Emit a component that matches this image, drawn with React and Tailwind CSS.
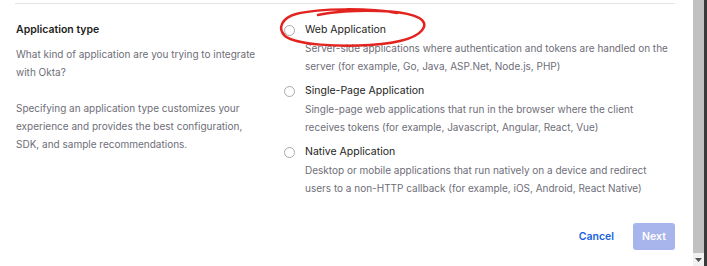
import React from "react";

const OPTIONS = [
  {
    label: "Web Application",
    desc: [
      "Server-side applications where authentication and tokens are handled on the",
      "server (for example, Go, Java, ASP.Net, Node.js, PHP)",
    ],
  },
  {
    label: "Single-Page Application",
    desc: [
      "Single-page web applications that run in the browser where the client",
      "receives tokens (for example, Javascript, Angular, React, Vue)",
    ],
  },
  {
    label: "Native Application",
    desc: [
      "Desktop or mobile applications that run natively on a device and redirect",
      "users to a non-HTTP callback (for example, iOS, Android, React Native)",
    ],
  },
];

function Radio() {
  return <span className="block w-[11px] h-[11px] rounded-full border border-[#a9a9b2] bg-white shrink-0" />;
}

export default function App() {
  return (
    <div className="w-[707px] h-[266px] bg-white flex overflow-hidden font-['Inter',sans-serif] text-[10px] leading-[18px] relative">
      <div className="w-[693px] pl-[15px] pr-[18px] pt-[3px]">
        <div className="border-t border-[#e3e3e6] pt-[17px] flex">
          <div className="w-[268px] pl-[1px]">
            <h3 className="font-semibold text-[10.5px] text-[#1d1d21]">Application type</h3>
            <p className="mt-[6px] text-[#6e6e78] whitespace-nowrap">
              What kind of application are you trying to integrate<br />with Okta?
            </p>
            <p className="mt-[18px] text-[#6e6e78] whitespace-nowrap">
              Specifying an application type customizes your<br />
              experience and provides the best configuration,<br />
              SDK, and sample recommendations.
            </p>
          </div>
          <div className="flex-1 flex flex-col gap-[7px]">
            {OPTIONS.map((o) => (
              <div key={o.label} className="flex gap-[10px]">
                <div className="h-[18px] flex items-center pl-[1px]">
                  <Radio />
                </div>
                <div className="whitespace-nowrap">
                  <div className="text-[10.5px] text-[#1d1d21]">{o.label}</div>
                  <div className="text-[#6e6e78]">
                    {o.desc[0]}<br />{o.desc[1]}
                  </div>
                </div>
              </div>
            ))}
            <div className="flex justify-end items-center gap-[19px] mt-[19px]">
              <button className="font-semibold text-[10.5px] text-[#1662dd]">Cancel</button>
              <button className="w-[42px] h-[27px] rounded-[3px] bg-[#a7b5ec] text-white text-[10.5px] font-semibold">Next</button>
            </div>
          </div>
        </div>
      </div>
      <div className="w-[11px] flex flex-col bg-[#f1f1f1]">
        <div className="flex-1 bg-[#c1c1c1]" />
        <div className="h-[13px] flex items-center justify-center">
          <svg width="7" height="4" viewBox="0 0 7 4"><path d="M0 0h7L3.5 4z" fill="#505050" /></svg>
        </div>
      </div>
      <div className="w-[3px] bg-[#3a3a3a]" />
      <svg className="absolute left-0 top-0 pointer-events-none" width="707" height="266" viewBox="0 0 707 266">
        <path
          d="M397 13 C370 8 320 8 296 14 C282 18 277 28 285 36 C296 45 340 47 370 45 C400 43 420 37 424 27 C427 17 408 12 380 11 C355 10 330 12 318 15"
          fill="none"
          stroke="#e2231e"
          strokeWidth="2.5"
          strokeLinecap="round"
        />
      </svg>
    </div>
  );
}
